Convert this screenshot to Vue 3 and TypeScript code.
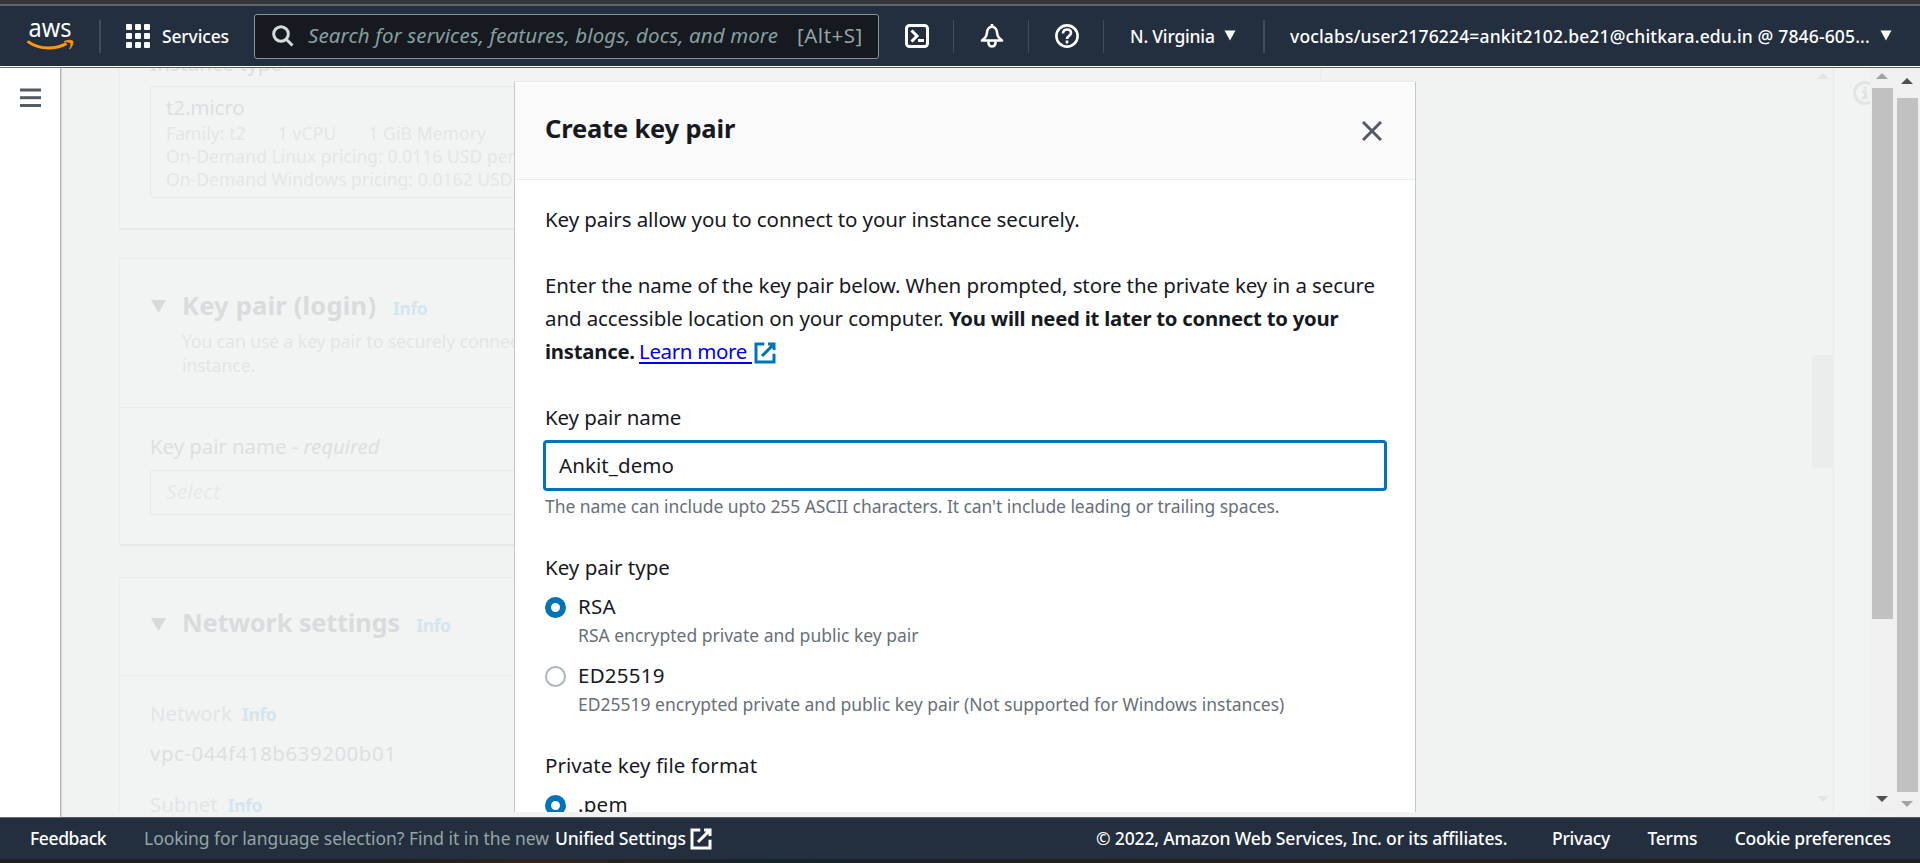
<script setup lang="ts">
import { ref } from 'vue'

interface RadioOption {
  value: string
  label: string
  description?: string
}

const keyName = ref('Ankit_demo')
const keyType = ref('rsa')
const fileFormat = ref('pem')

const keyTypes: RadioOption[] = [
  { value: 'rsa', label: 'RSA', description: 'RSA encrypted private and public key pair' },
  {
    value: 'ed25519',
    label: 'ED25519',
    description: 'ED25519 encrypted private and public key pair (Not supported for Windows instances)',
  },
]
const formats: RadioOption[] = [{ value: 'pem', label: '.pem' }]
const footerLinks = ['Privacy', 'Terms', 'Cookie preferences']
</script>

<template>
  <div class="page">
    <div class="browser-edge"></div>
    <header class="topbar">
      <svg class="logo" width="48" height="36" viewBox="0 0 48 36">
        <text x="1.5" y="18.500" textLength="43" lengthAdjust="spacingAndGlyphs" fill="#fff">aws</text>
        <path d="M.5 23.400c6 4.300 13 6.600 21 6.600 6.400 0 12.600-1.600 18-4.400" fill="none" stroke="#f90" stroke-width="3" />
        <path d="M37 23.700c3-1.800 7.500-1.800 8.800-.6.8 1.600-.4 5.600-3.200 8 1.200-2.600 1.700-5.300 1.100-6.200-.9-.9-3.700-1-6.700-1.200z" fill="#f90" stroke="#f90" stroke-width=".8" />
      </svg>
      <span class="sep sep-logo"></span>
      <svg class="grid-icon" width="24" height="24" viewBox="0 0 24 24" fill="#fff">
        <template v-for="r in 3" :key="r">
          <rect v-for="c in 3" :key="c" :x="(c - 1) * 9" :y="(r - 1) * 9" width="6" height="6" rx="1" />
        </template>
      </svg>
      <span class="services">Services</span>
      <div class="search">
        <svg width="22" height="22" viewBox="0 0 22 22" fill="none" stroke="#d5dbdb" stroke-width="3">
          <circle cx="9" cy="9" r="7.300" /><path d="M14 14l6.500 6.500" />
        </svg>
        <span class="placeholder">Search for services, features, blogs, docs, and more</span>
        <span class="shortcut">[Alt+S]</span>
      </div>
      <svg class="shell" width="24" height="24" viewBox="0 0 24 24" fill="none" stroke="#fff" stroke-width="3">
        <rect x="1.500" y="1.500" width="21" height="21" rx="3" /><path d="M6.500 6.500l5.500 5.500-5.500 5.500M13 16.500h6" />
      </svg>
      <span class="sep sep-a"></span>
      <svg class="bell" width="24" height="24" viewBox="0 0 24 24" fill="none" stroke="#fff" stroke-width="2.600" stroke-linejoin="round">
        <path d="M12 2.500c-4 .8-5 3.500-5.200 7-.2 3-1.800 4.700-4.800 7h20c-3-2.300-4.600-4-4.800-7-.2-3.500-1.200-6.200-5.200-7z" /><path d="M12 0v3M8.500 17.500v1.500a3.500 3.500 0 0 0 7 0v-1.500" />
      </svg>
      <span class="sep sep-b"></span>
      <svg class="help" width="24" height="24" viewBox="0 0 24 24" fill="none" stroke="#fff" stroke-width="2.600">
        <circle cx="12" cy="12" r="10.600" /><path d="M8 9.500c0-2.600 1.700-4 4-4s4 1.400 4 3.500c0 2.700-4 3-4 6M12 16.500v3" />
      </svg>
      <span class="sep sep-c"></span>
      <span class="region">N. Virginia</span>
      <svg class="caret" width="12" height="11" viewBox="0 0 12 11"><path d="M.5.500h11L6 10.500z" fill="#fff" /></svg>
      <span class="sep sep-d"></span>
      <span class="account">voclabs/user2176224=ankit2102.be21@chitkara.edu.in @ 7846-605...</span>
      <svg class="caret" width="12" height="11" viewBox="0 0 12 11"><path d="M.5.500h11L6 10.500z" fill="#fff" /></svg>
    </header>

    <div class="body">
      <aside class="sidebar">
        <svg width="21" height="20" viewBox="0 0 21 20" fill="#545b64">
          <rect width="21" height="3" y=".5" /><rect width="21" height="3" y="8.200" /><rect width="21" height="3" y="16" />
        </svg>
      </aside>

      <main class="content">
        <section class="card instance">
          <div class="label strong-label">Instance type</div>
          <div class="type-box">
            <div class="type-name">t2.micro</div>
            <div class="type-line specs"><span>Family: t2</span><span>1 vCPU</span><span>1 GiB Memory</span></div>
            <div class="type-line">On-Demand Linux pricing: 0.0116 USD per Hour</div>
            <div class="type-line">On-Demand Windows pricing: 0.0162 USD per Hour</div>
          </div>
        </section>

        <section class="card keypair">
          <div class="card-head">
            <svg class="expander" width="15" height="13" viewBox="0 0 15 13"><path d="M0 0h15L7.500 13z" /></svg>
            <div>
              <h2>Key pair (login) <a class="info">Info</a></h2>
              <p>You can use a key pair to securely connect to your<br />instance.</p>
            </div>
          </div>
          <div class="card-body">
            <div class="label">Key pair name - <i>required</i></div>
            <div class="select-box">Select</div>
          </div>
        </section>

        <section class="card network">
          <div class="card-head">
            <svg class="expander" width="15" height="13" viewBox="0 0 15 13"><path d="M0 0h15L7.500 13z" /></svg>
            <h2 class="tight">Network settings <a class="info">Info</a></h2>
          </div>
          <div class="card-body">
            <div class="label pale">Network <a class="info">Info</a></div>
            <div class="label vpc">vpc-044f418b639200b01</div>
            <div class="label pale">Subnet <a class="info">Info</a></div>
          </div>
        </section>
      </main>

      <div class="faint-scroll">
        <svg width="12" height="6" viewBox="0 0 12 6"><path d="M6 0l6 6H0z" /></svg>
        <div class="faint-thumb"></div>
        <svg width="12" height="6" viewBox="0 0 12 6"><path d="M0 0h12L6 6z" /></svg>
      </div>
      <div class="help-strip">
        <svg width="24" height="24" viewBox="0 0 24 24" fill="none" stroke="#e1e3e4" stroke-width="3">
          <circle cx="12" cy="12" r="10.500" /><path d="M12 5.500v3M9 11h3.500v6M9 17h6" />
        </svg>
      </div>
      <div class="scroll inner">
        <svg width="12" height="6" viewBox="0 0 12 6"><path d="M6 0l6 6H0z" fill="#a3a3a3" /></svg>
        <div class="thumb"></div>
        <svg class="down" width="12" height="6" viewBox="0 0 12 6"><path d="M0 0h12L6 6z" fill="#505050" /></svg>
      </div>
      <div class="scroll outer">
        <svg width="12" height="6" viewBox="0 0 12 6"><path d="M6 0l6 6H0z" fill="#505050" /></svg>
        <div class="thumb"></div>
        <svg class="down" width="12" height="6" viewBox="0 0 12 6"><path d="M0 0h12L6 6z" fill="#a3a3a3" /></svg>
      </div>

      <div class="modal">
        <div class="modal-head">
          <h1>Create key pair</h1>
          <svg width="20" height="20" viewBox="0 0 20 20" stroke="#545b64" stroke-width="3"><path d="M1 1l18 18M19 1L1 19" /></svg>
        </div>
        <div class="modal-body">
          <p>Key pairs allow you to connect to your instance securely.</p>
          <p class="para">
            <span class="line">Enter the name of the key pair below. When prompted, store the private key in a secure</span>
            <span class="line">and accessible location on your computer. <b>You will need it later to connect to your</b></span>
            <span class="line"><b>instance.</b> <a class="learn">Learn more&nbsp;</a><svg class="ext" width="24" height="24" viewBox="0 0 16 16" fill="none" stroke="#0073bb" stroke-width="2"><path d="M14 8.500V14H2V2h5.500M10 2h4v4M6 10l7.400-7.400" /></svg></span>
          </p>
          <div class="field-label">Key pair name</div>
          <div class="input">{{ keyName }}</div>
          <div class="hint">The name can include upto 255 ASCII characters. It can't include leading or trailing spaces.</div>
          <div class="field-label type-label">Key pair type</div>
          <div v-for="o in keyTypes" :key="o.value" class="option" @click="keyType = o.value">
            <span class="radio" :class="{ on: keyType === o.value }"></span>
            <div>
              <div class="option-label">{{ o.label }}</div>
              <div class="option-desc">{{ o.description }}</div>
            </div>
          </div>
          <div class="field-label format-label">Private key file format</div>
          <div v-for="o in formats" :key="o.value" class="option" @click="fileFormat = o.value">
            <span class="radio" :class="{ on: fileFormat === o.value }"></span>
            <div class="option-label">{{ o.label }}</div>
          </div>
        </div>
      </div>
    </div>

    <footer class="footer">
      <span class="feedback">Feedback</span>
      <span class="looking">Looking for language selection? Find it in the new</span>
      <span class="unified">Unified Settings</span>
      <svg class="ext-foot" width="24" height="24" viewBox="0 0 16 16" fill="none" stroke="#fff" stroke-width="2"><path d="M14 8.500V14H2V2h5.500M10 2h4v4M6 10l7.400-7.400" /></svg>
      <span class="copy">© 2022, Amazon Web Services, Inc. or its affiliates.</span>
      <span v-for="l in footerLinks" :key="l" class="flink">{{ l }}</span>
    </footer>
    <div class="desktop-edge"></div>
  </div>
</template>

<style>
html, body { margin: 0; overflow: hidden; }
</style>

<style scoped>
* { box-sizing: border-box; }
.page {
  width: 1920px; height: 863px; display: flex; flex-direction: column; overflow: hidden;
  font-family: "Noto Sans", "Open Sans", sans-serif; font-size: 20.5px; line-height: 33px; letter-spacing: -0.1px;
  color: #16191f; white-space: nowrap;
}
.page svg { flex: none; display: block; }
p, h1, h2 { margin: 0; }
.browser-edge { height: 6px; background: #35363a; border-bottom: 2px solid #5f6368; flex: none; }

.topbar {
  height: 62px; flex: none; display: flex; align-items: center; background: #232f3e; color: #fff;
  padding: 0 0 1px 27px; border-bottom: 1px solid #545b64; box-shadow: inset 0 -1px #fff;
  font-size: 17.5px; font-weight: 500;
}
.logo { overflow: visible; }
.logo text { font: 400 25px "Noto Sans", sans-serif; letter-spacing: 0; }
.sep { width: 1px; height: 33px; background: #414d5c; flex: none; }
.sep-logo { width: 2px; margin: 0 25px 0 24px; }
.services { width: 67px; margin: 0 25px 0 12px; letter-spacing: -0.15px; }
.search {
  width: 625px; height: 45px; flex: none; display: flex; align-items: center; padding: 0 14px 1px 17px;
  background: #16191f; border: 1px solid #879596; border-radius: 3px; color: #95a5a6; font-size: 20.5px; font-weight: 400;
}
.placeholder { margin-left: 14px; font-style: italic; letter-spacing: 0.12px; color: #879f9f; width: 489px; }
.shortcut { letter-spacing: 0.5px; }
.shell { margin-left: 26px; }
.sep-a { margin: 0 26px 0 24px; }
.sep-b { margin: 0 26px 0 24px; }
.sep-c { margin: 0 26px 0 24px; }
.region { width: 84px; letter-spacing: -0.2px; }
.caret { margin-left: 10px; position: relative; top: -1px; }
.sep-d { width: 2px; margin: 0 25px 0 27px; }
.account { width: 580px; letter-spacing: 0.16px; }

.body { height: 749px; flex: none; display: flex; position: relative; background: #f1f3f3; }
.sidebar { width: 61px; background: #fff; border-right: 1px solid #b4b9bd; box-shadow: 1px 0 1px #d5dadb; padding: 20px 0 0 20px; flex: none; }

.content { width: 1260px; height: 744px; flex: none; padding-left: 58px; overflow: hidden; color: #dcdfe0; }
.card { background: #f2f4f4; border: 1px solid #eaecec; border-bottom: 2px solid #e6e9e9; }
.label { font-size: 20.5px; }
.pale { color: #e2e5e6; }
.instance { height: 192px; margin-top: -30px; padding: 8px 29px 0 30px; }
.strong-label { letter-spacing: 0.2px; }
.type-box { height: 112px; margin-top: 6px; border: 1px solid #e6e9e9; border-radius: 3px; padding: 5px 15px; }
.type-name { font-size: 20.5px; line-height: 30px; letter-spacing: -0.1px; }
.type-line { font-size: 17.5px; line-height: 22.500px; color: #e3e6e6; letter-spacing: 0.04px; }
.specs { display: flex; gap: 32px; line-height: 23px; letter-spacing: 0.1px; }
.keypair { height: 288px; margin-top: 28px; }
.card-head { display: flex; padding: 27px 0 0 30px; border-bottom: 1px solid #eceeee; height: 149px; }
.expander { margin: 14px 16px 0 1px; fill: #d6dadb; }
h2 { font-size: 25.5px; line-height: 38px; letter-spacing: 0.2px; font-weight: 700; color: #d8dcdd; }
h2.tight { letter-spacing: -0.25px; }
.info { font-size: 17.5px; font-weight: 700; color: #d6e4ee; margin-left: 10px; letter-spacing: -0.4px; }
.label .info { margin-left: 5px; }
.card-head p { font-size: 17.5px; line-height: 24px; color: #e2e5e6; letter-spacing: -0.05px; margin-top: 2px; }
.card-body { padding: 22px 29px 0 30px; }
.select-box { height: 45px; margin-top: 7px; border: 1px solid #e6e9e9; border-radius: 3px; padding: 4px 15px; font-style: italic; color: #e6e9e9; letter-spacing: 0.3px; }
.network { height: 300px; margin-top: 31px; }
.network .card-head { height: 98px; padding-top: 25px; }
.network .expander { margin-top: 15px; }
.network .card-body { padding-top: 21px; }
.vpc { margin: 6px 0 18px; letter-spacing: 0.5px; }

.faint-scroll { width: 26px; height: 744px; margin-left: 487px; padding-top: 5px; border-right: 1px solid #e9ebeb; fill: #e3e5e5; flex: none; }
.faint-scroll svg { margin-left: 9px; }
.faint-thumb { width: 22px; height: 113px; margin: 276px 0 328px 4px; background: #ebeded; }
.help-strip { width: 36px; height: 744px; padding: 13px 0 0 19px; background: #f2f4f4; overflow: hidden; flex: none; }
.scroll { width: 25px; background: #f0f0f0; flex: none; display: flex; flex-direction: column; padding-left: 2px; }
.scroll svg { margin-left: 4px; }
.scroll .thumb { width: 21px; background: #c1c1c1; }
.inner { height: 744px; padding-top: 5px; }
.inner .thumb { height: 531px; margin: 9px 0 177px; }
.outer { height: 749px; padding-top: 10px; }
.outer .thumb { height: 694px; margin: 14px 0 9px; }

/* Dialog layered over the launch form */
.modal { position: absolute; left: 515px; top: 14px; width: 900px; height: 730px; background: #fff; overflow: hidden; border-top: 1px solid #fff; }
.body::before { content: ""; position: absolute; left: 514px; top: 13px; width: 902px; height: 730px; background: #c3c8ca; border-top: 1px solid #e6e9e9; }
.modal-head { height: 97px; display: flex; justify-content: space-between; padding: 24px 33px 0 30px; background: #fafafa; border-bottom: 1px solid #eaeded; }
h1 { font-size: 25.500px; line-height: 42px; font-weight: 700; letter-spacing: -0.18px; }
.modal-head svg { margin-top: 14px; }
.modal-body { padding: 23px 29px 0 30px; }
.para { margin-top: 33px; }
.line { display: block; height: 33px; }
b { font-size: 20.300px; letter-spacing: -0.230px; }
.learn { color: #0000f0; text-decoration: underline; text-decoration-thickness: 2px; text-underline-offset: 3px; letter-spacing: -0.35px; margin-left: -1px; }
.page .ext { display: inline-block; vertical-align: -6px; margin-left: 1px; }
.field-label { margin-top: 33px; letter-spacing: -0.120px; }
.input { width: 844px; height: 51px; margin: 6px 0 0 -2px; border: 3px solid #0073bb; border-radius: 4px; padding: 6px 13px; letter-spacing: 0.08px; }
.hint, .option-desc { font-size: 17.5px; line-height: 24px; color: #687078; letter-spacing: -0.07px; }
.hint { margin-top: 3px; }
.type-label { margin-top: 33px; letter-spacing: 0; }
.option { display: flex; margin-bottom: 12px; }
.type-label + .option { margin-top: 6px; }
.format-label { margin-top: 33px; letter-spacing: 0.06px; }
.format-label + .option { margin-top: 6px; }
.option-label { letter-spacing: 0.25px; }
.option-desc { letter-spacing: 0; }
.radio { width: 21px; height: 21px; margin: 7px 12px 0 0; border: 2px solid #aab7b8; border-radius: 50%; flex: none; }
.radio.on { border: 6.500px solid #0073bb; }

.footer {
  height: 42px; flex: none; display: flex; align-items: center; padding: 0 0 0 30px; background: #232f3e; color: #fff;
  border-top: 1px solid #545b64; font-size: 17.5px; font-weight: 500; letter-spacing: -0.2px;
}
.feedback { width: 76px; margin-right: 38px; letter-spacing: -0.4px; }
.looking { width: 406px; margin-right: 5px; color: #95a5a6; font-weight: 400; letter-spacing: -0.03px; }
.unified { width: 131px; letter-spacing: -0.15px; }
.ext-foot { margin-left: 3px; }
.copy { width: 412px; margin-left: 383px; letter-spacing: -0.15px; }
.flink { margin-left: 44px; letter-spacing: -0.28px; }
.flink + .flink { margin-left: 37.500px; }
.desktop-edge { height: 4px; flex: none; background: linear-gradient(90deg, #1e1e1e 0 20%, #33231a 28%, #14242b 40%, #1f1f1f 52%, #2a2019 72%, #1f1f1f 90%); }
</style>
